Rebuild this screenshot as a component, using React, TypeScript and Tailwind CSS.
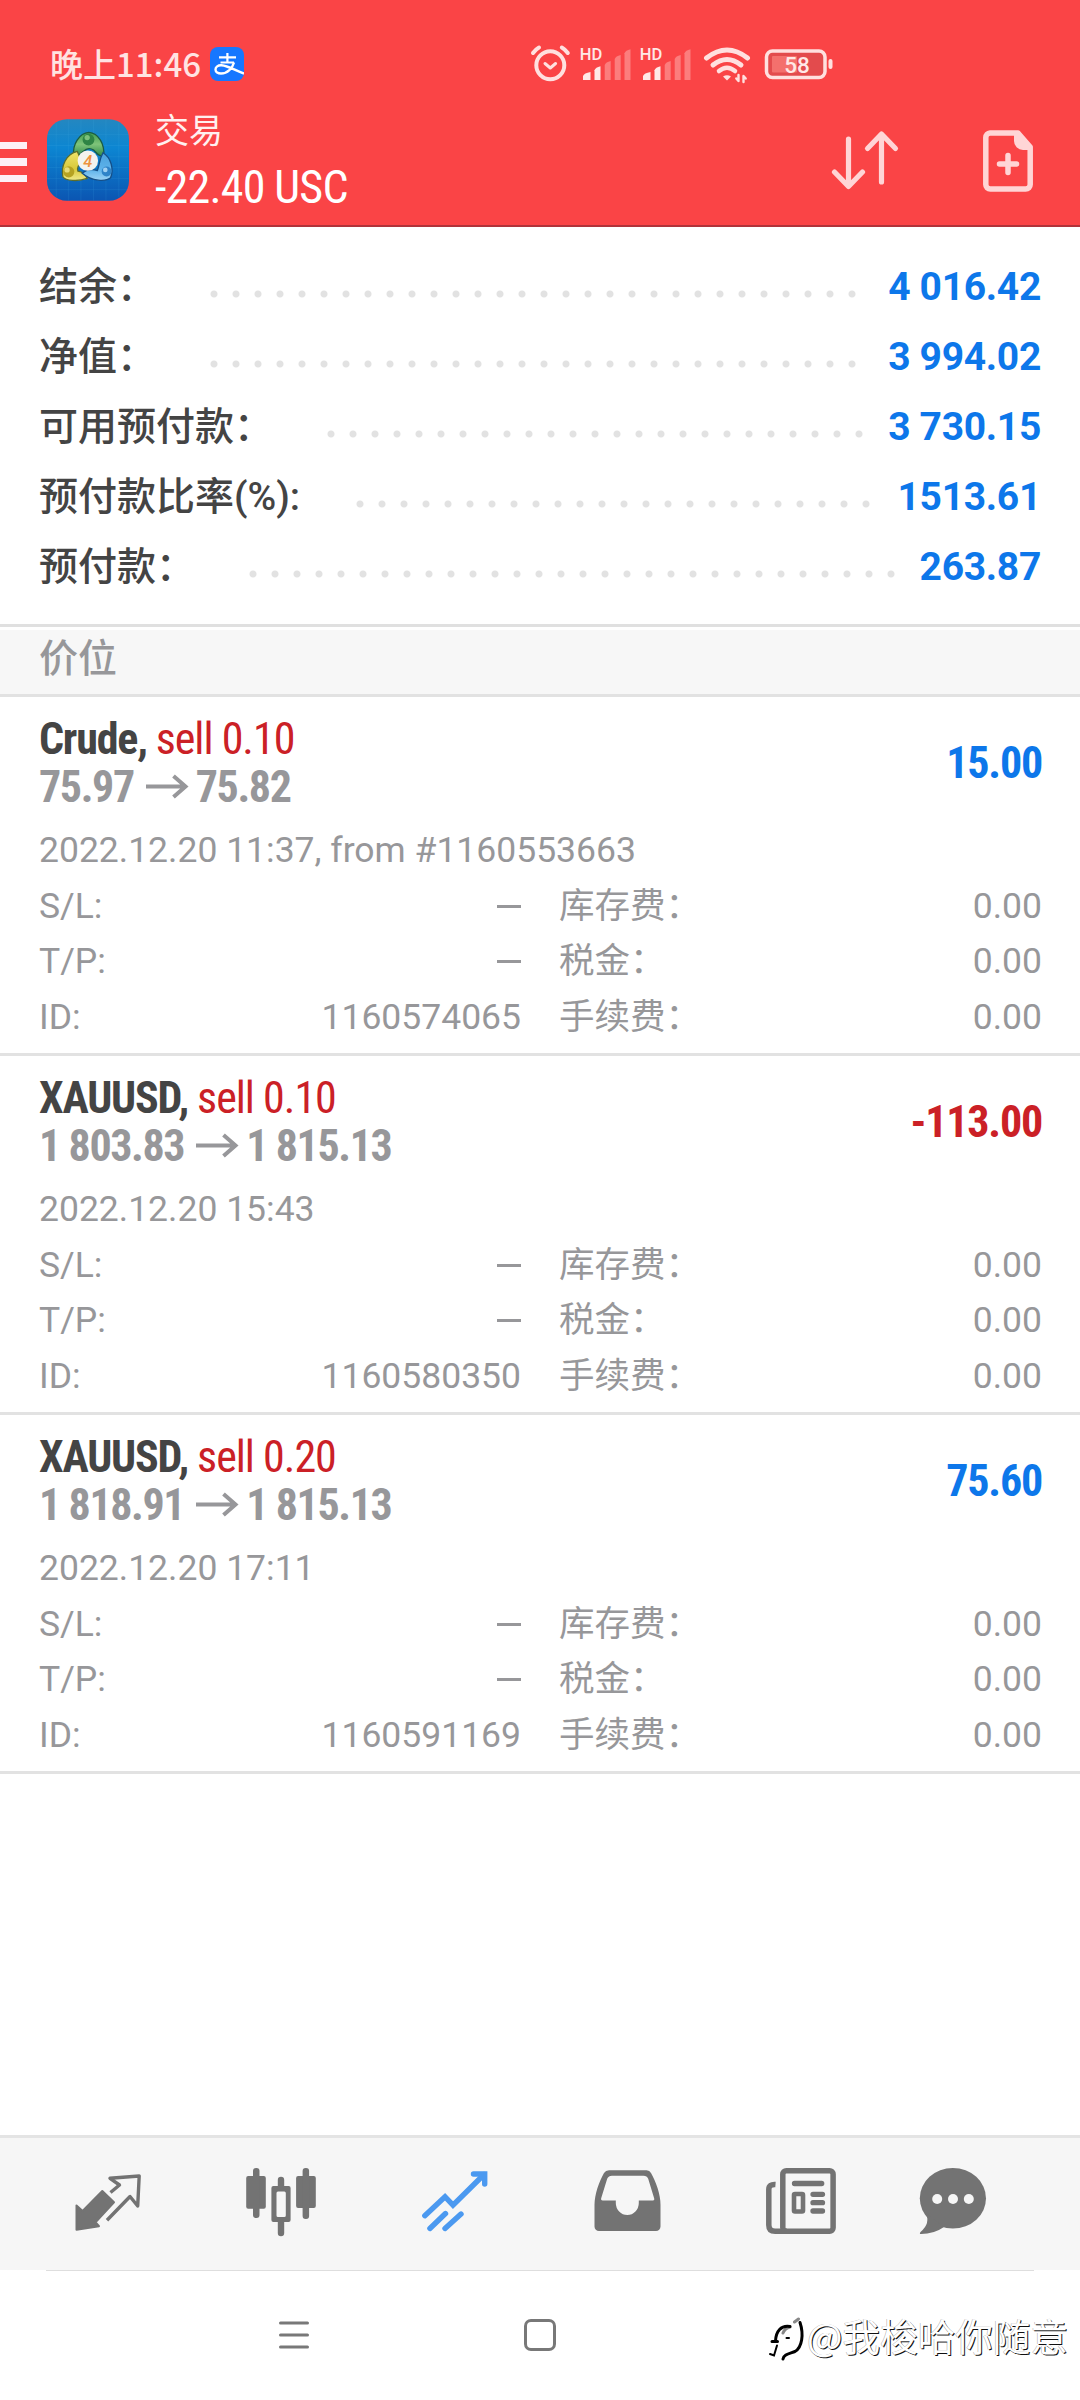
import type { ReactNode } from "react"

const summary = [
  { label: "结余：", value: "4 016.42", dots: "ml-[202.5px] w-[660px]" },
  { label: "净值：", value: "3 994.02", dots: "ml-[202.5px] w-[660px]" },
  { label: "可用预付款：", value: "3 730.15", dots: "ml-[319.5px] w-[550px]" },
  { label: "预付款比率(%):", value: "1513.61", dots: "ml-[348.5px] w-[528px]" },
  { label: "预付款：", value: "263.87", dots: "ml-[241.5px] w-[660px]" },
]

const positions = [
  {
    symbol: "Crude",
    side: "sell 0.10",
    open: "75.97",
    current: "75.82",
    profit: "15.00",
    time: "2022.12.20 11:37, from #1160553663",
    id: "1160574065",
  },
  {
    symbol: "XAUUSD",
    side: "sell 0.10",
    open: "1 803.83",
    current: "1 815.13",
    profit: "-113.00",
    time: "2022.12.20 15:43",
    id: "1160580350",
  },
  {
    symbol: "XAUUSD",
    side: "sell 0.20",
    open: "1 818.91",
    current: "1 815.13",
    profit: "75.60",
    time: "2022.12.20 17:11",
    id: "1160591169",
  },
]

function StatusIcons() {
  const bars = [
    [583, 72, 7.5, 1],
    [594.5, 66.3, 6, 1],
    [604.7, 61, 6, 0.35],
    [614.7, 55, 6, 0.35],
    [624.5, 49.3, 6, 0.35],
  ]
  return (
    <svg width="310" height="50" viewBox="528 40 310 50" fill="none" stroke="#ffe0df" strokeLinecap="round" strokeLinejoin="round">
      {/* alarm */}
      <circle cx="550.3" cy="65.3" r="14" strokeWidth="4" />
      <path d="M545 63.500l5.300 4.500 5.300-4.500" strokeWidth="3" />
      <path d="M533 53q2.500-3.500 6-5.500M567.800 53q-2.500-3.500-6-5.500" strokeWidth="4" />
      {/* two sim cards */}
      {[0, 60].map((dx) => (
        <g key={dx} transform={`translate(${dx} 0)`} stroke="none" fill="#ffe8e6">
          <text x="579.800" y="60" className="font-[Roboto] text-[16.500px] font-medium">
            HD
          </text>
          {bars.map(([x, y, w, o]) => (
            <path key={x} d={`M${x} 80V${y + 4}q1-3 ${w} -4V80z`} opacity={o} />
          ))}
        </g>
      ))}
      {/* wifi */}
      <path d="M706.500 58q20.500-16 41 0" strokeWidth="5" />
      <path d="M713 65q14-11 28 0" strokeWidth="5" />
      <path d="M719 71q8-6.500 16 0" strokeWidth="4.500" />
      <path d="M723 76.500q4-2.500 8 0l-4 4z" fill="#ffe0df" stroke="none" />
      <path d="M738.500 75v6l-2.200-2.500M743.500 82v-6l2.200 2.500" strokeWidth="2.400" />
      {/* battery */}
      <rect x="766.500" y="51" width="58.500" height="26.500" rx="6" strokeWidth="3.500" fill="#e34b4d" />
      <rect x="772" y="56" width="25" height="16.500" rx="1" fill="#f4706d" stroke="none" />
      <path d="M830.500 61v6" strokeWidth="4" />
      <text x="797" y="72.700" textAnchor="middle" fill="#ffe8e6" stroke="none" className="font-[Roboto] text-[22.500px] font-medium">
        58
      </text>
    </svg>
  )
}

function AlipayIcon() {
  return (
    <svg className="-mt-[2px] ml-[9px] h-[34px] w-[34px]" viewBox="0 0 34 34" fill="none" stroke="#fff" strokeWidth="2.200">
      <rect width="34" height="34" rx="8" fill="#1677ff" stroke="none" />
      <path d="M9 10.300h17M17.400 6v9.500M10.500 15.500h13.500" />
      <path d="M24 15.500c-1.500 5.500-6.500 11-13 11-3 0-5.500-1.500-5.500-4s2.500-4.500 6-4.200c7 .5 13 5 22.500 8.200" strokeWidth="2.400" />
    </svg>
  )
}

function AppLogo() {
  return (
    <svg className="-mt-[2px] ml-[20px] h-[82px] w-[82px]" viewBox="20 28 249 248">
      <defs>
        <linearGradient id="sky" x1="0" y1="0" x2="0" y2="1">
          <stop offset="0" stopColor="#2487c0" />
          <stop offset="0.35" stopColor="#0c86d2" />
          <stop offset="1" stopColor="#0b55b2" />
        </linearGradient>
        <linearGradient id="green" x1="0" y1="0" x2="0" y2="1">
          <stop offset="0" stopColor="#3d9c50" />
          <stop offset="0.5" stopColor="#7fc47a" />
          <stop offset="1" stopColor="#2f8a48" />
        </linearGradient>
        <linearGradient id="yellow" x1="0" y1="0" x2="0" y2="1">
          <stop offset="0" stopColor="#efe46a" />
          <stop offset="0.6" stopColor="#d8c93a" />
          <stop offset="1" stopColor="#efe98a" />
        </linearGradient>
        <linearGradient id="blue" x1="0" y1="0" x2="0" y2="1">
          <stop offset="0" stopColor="#4aa0dc" />
          <stop offset="0.6" stopColor="#5db2ea" />
          <stop offset="1" stopColor="#9bd2f5" />
        </linearGradient>
      </defs>
      <rect x="20" y="28" width="249" height="248" rx="60" fill="url(#sky)" />
      <path
        d="M48 40v224M85 29v246M123 29v246M161 29v246M199 29v246M238 40v224M21 75h247M21 108h247M21 142h247M21 175h247M21 208h247M21 242h247"
        stroke="#4db4ea"
        strokeWidth="1"
        opacity="0.4"
      />
      <g strokeWidth="4">
        <path d="M101 138C97 105 118 70 147 68c30 2 49 37 45 72-14 3-20-8-30-18-12-8-22-6-32 4-8 8-16 14-29 12z" fill="url(#green)" stroke="#1b5c44" />
        <path d="M112 126c-34 8-50 44-44 76 8 14 46 16 74 6-6-14-16-20-28-22-4-10 2-20 12-28z" fill="url(#yellow)" stroke="#5c6d2c" />
        <path d="M190 130c24 14 34 50 23 76-14 12-56 12-86-14 12-10 28-14 46-8 6-16 6-34 17-54z" fill="url(#blue)" stroke="#154f88" />
      </g>
      <circle cx="146" cy="90" r="18" fill="#2f8445" />
      <circle cx="142" cy="84" r="8" fill="#7cc07c" />
      <circle cx="86" cy="188" r="17" fill="#b5a222" />
      <circle cx="81" cy="182" r="8" fill="#e6dc78" />
      <circle cx="201" cy="187" r="15" fill="#2f83c8" />
      <circle cx="197" cy="182" r="7" fill="#9fd0f2" />
      <circle cx="144" cy="154" r="31" fill="#f4f3ef" />
      <text x="144" y="172" textAnchor="middle" fill="#ee9440" className="font-[Roboto] text-[50px] font-medium italic">
        4
      </text>
    </svg>
  )
}

function Header() {
  return (
    <header className="h-[227px] border-b-2 border-[#b0333a] bg-[#fa4446] pt-[40px] text-white">
      <div className="flex h-[50px] items-center pl-[50px]">
        <span className="w-[151px] whitespace-nowrap pb-[3px] font-['Noto_Sans_CJK_SC'] text-[33px] font-medium leading-[47px] text-[#ffe3e2]">
          晚上11:46
        </span>
        <AlipayIcon />
        <div className="ml-[284px]">
          <StatusIcons />
        </div>
      </div>
      <div className="mt-[17px] flex h-[108px] items-center">
        <div className="flex w-[27px] flex-col gap-[9px] pt-[2px]">
          <div className="h-[7.500px] bg-[#fdf0f6]" />
          <div className="h-[7.500px] bg-[#fdf0f6]" />
          <div className="h-[7.500px] bg-[#fdf0f6]" />
        </div>
        <AppLogo />
        <div className="ml-[26px] w-[300px]">
          <h1 className="pb-[3px] text-[34px] leading-[49px] text-[#fff0ef]">交易</h1>
          <p className="font-['Roboto_Condensed'] text-[46px] leading-[56px] tracking-[-0.800px]">-22.40 USC</p>
        </div>
        <svg className="ml-[376px]" width="70" height="62" viewBox="0 0 70 62" fill="none" stroke="#ffd5d6" strokeWidth="5.200" strokeLinecap="round" strokeLinejoin="round">
          <path d="M17.500 9v47M3.500 42l14 14.500L31.500 42" />
          <path d="M50.500 52V4M36.500 18.500L50.500 4l14 14.500" />
        </svg>
        <svg className="ml-[82px]" width="50" height="62" viewBox="0 0 50 62" fill="none" stroke="#ffd5d6" strokeWidth="5.500">
          <path d="M7 3h28l12.200 14v37.500a4.500 4.500 0 0 1-4.500 4.500H7.300a4.500 4.500 0 0 1-4.500-4.500v-47A4.500 4.500 0 0 1 7 3z" strokeLinejoin="round" />
          <path d="M31 3h5l12 14v3H40a9 9 0 0 1-9-9z" fill="#ffd5d6" stroke="none" />
          <path d="M25 25.500v17M16.500 34h17" strokeLinecap="round" />
        </svg>
      </div>
    </header>
  )
}

function PositionCard({ position }: { position: (typeof positions)[number] }) {
  const negative = position.profit.startsWith("-")
  return (
    <article className="h-[359px] border-b-[3px] border-[#e2e2e2] pl-[39px] pr-[38px] pt-[18px] text-[#97979a]">
      <div className="flex items-center justify-between font-['Roboto_Condensed'] text-[44px] leading-[48px]">
        <div>
          <h2 className="text-[#444]">
            <span className="font-bold tracking-[-1.200px]">{position.symbol}, </span>
            <span className="tracking-[-1px] text-[#cb2026]">{position.side}</span>
          </h2>
          <div className="flex h-[48px] items-center font-bold tracking-[-1.400px]">
            <span>{position.open}</span>
            <svg className="ml-[12px] mr-[7px]" width="43" height="26" viewBox="0 0 43 26" fill="none" stroke="currentColor" strokeWidth="4">
              <path d="M0 12.500h40M27.500 2l12 10.500-12 10.500" />
            </svg>
            <span>{position.current}</span>
          </div>
        </div>
        <span className={negative ? "font-bold tracking-[-1.200px] text-[#cb2026]" : "font-bold tracking-[-1.200px] text-[#0d77ea]"}>
          {position.profit}
        </span>
      </div>
      <p className="mt-[11px] text-[35.500px] leading-[57px]">{position.time}</p>
      <div className="flex gap-[38px] text-[35.500px] leading-[55.300px]">
        <dl className="w-[482px]">
          <Detail label="S/L:">
            <span className="h-[3px] w-[24px] bg-[#97979a]" />
          </Detail>
          <Detail label="T/P:">
            <span className="h-[3px] w-[24px] bg-[#97979a]" />
          </Detail>
          <Detail label="ID:">{position.id}</Detail>
        </dl>
        <dl className="flex-1">
          <Detail label="库存费：">0.00</Detail>
          <Detail label="税金：">0.00</Detail>
          <Detail label="手续费：">0.00</Detail>
        </dl>
      </div>
    </article>
  )
}

function Detail({ label, children }: { label: string; children: ReactNode }) {
  return (
    <div className="flex items-center justify-between">
      <dt className="whitespace-nowrap">{label}</dt>
      <dd className="flex items-center">{children}</dd>
    </div>
  )
}

function TabBar() {
  return (
    <nav className="relative flex h-[135px] items-start gap-[93.300px] border-t-[3px] border-[#e4e4e4] bg-[#f6f6f6] pl-[68px] pt-[23px] text-[#737373]">
      {/* quotes */}
      <svg className="size-[80px] shrink-0" viewBox="0 0 80 80" fill="none" stroke="currentColor" strokeLinejoin="round">
        <path d="M8.500 44.500v24.200L31 65.200l-3.500-4L46 41.300 34.300 30 14.600 50z" fill="currentColor" strokeWidth="2" />
        <path d="M42.500 31.500l9-7.500L42 17.300 71.200 15l-1.500 30-7.700-9.500-23 23.700" strokeWidth="3.400" />
      </svg>
      {/* charts */}
      <svg className="size-[80px] shrink-0" viewBox="0 0 80 80" fill="currentColor">
        <rect x="5.200" y="15" width="19.600" height="32.700" rx="2" />
        <rect x="12" y="7" width="6.500" height="50" rx="3" />
        <path fillRule="evenodd" d="M32.400 25h15.200a2 2 0 0 1 2 2v32a2 2 0 0 1-2 2H32.400a2 2 0 0 1-2-2V27a2 2 0 0 1 2-2zM37 30.500a1.500 1.500 0 0 0-1.500 1.500v22.500A1.500 1.500 0 0 0 37 56h6.300a1.500 1.500 0 0 0 1.500-1.500V32a1.500 1.500 0 0 0-1.500-1.500z" />
        <path d="M36.800 26v-7a3.200 3.200 0 0 1 6.400 0v7zM36.800 60v12a3.200 3.200 0 0 0 6.400 0V60z" />
        <rect x="55.100" y="15" width="19.700" height="32" rx="2" />
        <rect x="61.600" y="7" width="6.500" height="51" rx="3" />
      </svg>
      {/* trade, active tab */}
      <svg className="size-[80px] shrink-0 text-[#4b99f0]" viewBox="0 0 80 80" fill="none" stroke="currentColor" strokeWidth="5.400" strokeLinecap="round">
        <path d="M9.800 54.700L30 35.700l8 8.500L69 13.500" strokeLinejoin="miter" />
        <path d="M58.500 13h11.200V23" />
        <path d="M14.900 67.500L30.500 52.500M30 67.500L46 53" />
      </svg>
      {/* history */}
      <svg className="size-[80px] shrink-0" viewBox="0 0 80 80" fill="currentColor">
        <path
          fillRule="evenodd"
          d="M21 9.300h37.600q3 0 4.400 2.700c5 9 9.500 21 9.500 32v21.500a4.500 4.500 0 0 1-4.500 4.500H11a4.500 4.500 0 0 1-4.500-4.500V44c0-11 4.500-23 9.500-32q1.600-2.700 5-2.700zM24 14.700q-3.500 0-4.800 3L13.100 37.500q-.5 1.900 1.500 1.900h13.200v2.600a11.500 12 0 0 0 23 0v-2.600H65q1.800 0 1.200-1.900l-6-19.800q-1.200-3-4.700-3z"
        />
      </svg>
      {/* news */}
      <svg className="size-[80px] shrink-0" viewBox="0 0 80 80" fill="none" stroke="currentColor" strokeWidth="5.500">
        <rect x="21.800" y="9.700" width="50.300" height="60.600" rx="3.500" />
        <path d="M14.500 23.500q-6.700-.5-6.700 5V64q0 6.300 6.300 6.300H26" />
        <path d="M33.500 22.500h27.200M52 33.300h9.500M52 41.700h9.500M52 50h9.500" strokeWidth="5.300" strokeLinecap="round" />
        <rect x="33" y="33" width="9" height="17.500" rx="1" strokeWidth="4.600" />
      </svg>
      {/* messages */}
      <svg className="-ml-[21px] size-[80px] shrink-0" viewBox="0 0 80 80" fill="currentColor">
        <ellipse cx="39.900" cy="37.300" rx="33.100" ry="30.300" />
        <path d="M12.500 52Q18 62 7.500 71q-1.500 2 .5 2 13 0 23-7z" />
        <g fill="#f6f6f6">
          <circle cx="24.200" cy="38" r="5" />
          <circle cx="40" cy="38" r="5" />
          <circle cx="55.800" cy="38" r="5" />
        </g>
      </svg>
    </nav>
  )
}

function SystemBar() {
  return (
    <footer className="relative h-[130px] bg-white">
      <div className="mx-[46px] h-px bg-[#dedede]" />
      <div className="flex h-[128px] items-center pl-[279px]">
        <svg width="30" height="30" viewBox="0 0 30 30" stroke="#787878" strokeWidth="3" strokeLinecap="round">
          <path d="M1.500 3h27M1.500 15h27M1.500 27h27" />
        </svg>
        <svg className="ml-[215px]" width="32" height="32" viewBox="0 0 32 32" fill="none" stroke="#787878" strokeWidth="3">
          <rect x="1.500" y="1.500" width="29" height="29" rx="5.500" />
        </svg>
      </div>
      {/* author mark lying over the back button */}
      <div className="absolute left-[767px] top-[39px] flex items-start">
        <svg className="mt-[8px]" width="40" height="50" viewBox="0 0 40 50" fill="none" stroke="#000" strokeLinecap="round">
          <path d="M16 16q2-5 7-6M27.500 5l4-3" stroke="#888" strokeWidth="3" />
          <path d="M23 9.500C14 8 9 14 8.500 24M5 24.500h5.500" strokeWidth="3" />
          <path d="M10 28.500L7 38.500l-4-1.500" strokeWidth="2" />
          <path d="M33 5.500c4 12 2 25-5 29-7 2.500-11 3-12 7.500" strokeWidth="3" />
          <path d="M19.500 21h2.500" strokeWidth="2" />
        </svg>
        <span className="whitespace-nowrap font-['Noto_Sans_CJK_SC'] text-[37.600px] leading-[52px] text-white [text-shadow:1px_1px_0_#111,-0.5px_-0.5px_0_#aaa]">
          @我梭哈你随意
        </span>
      </div>
    </footer>
  )
}

export default function App() {
  return (
    <div className="flex h-[2400px] w-[1080px] flex-col overflow-hidden bg-white font-[Roboto,'Noto_Sans_CJK_SC',sans-serif]">
      <Header />
      <section className="h-[400px] border-b-[3px] border-[#e0e0e0] pt-[25px]">
        {summary.map((row) => (
          <div key={row.label} className="relative flex h-[70px] justify-between px-[39px] text-[39px] font-medium leading-[70px]">
            <span className="text-[#444]">{row.label}</span>
            <span className="font-bold tracking-[-0.300px] text-[#0d77ea]">{row.value}</span>
            <div
              className={`absolute left-0 top-[31px] h-[22px] bg-[radial-gradient(circle,#e2e2e2_3px,transparent_4px)] bg-[length:22px_22px] ${row.dots}`}
            />
          </div>
        ))}
      </section>
      <h2 className="h-[70px] border-b-[3px] border-t-[3px] border-b-[#e2e2e2] border-t-white bg-[#f7f7f7] px-[39px] text-[39px] font-medium leading-[58px] text-[#97979a]">
        价位
      </h2>
      <main className="flex-1">
        {positions.map((position) => (
          <PositionCard key={position.id} position={position} />
        ))}
      </main>
      <TabBar />
      <SystemBar />
    </div>
  )
}
